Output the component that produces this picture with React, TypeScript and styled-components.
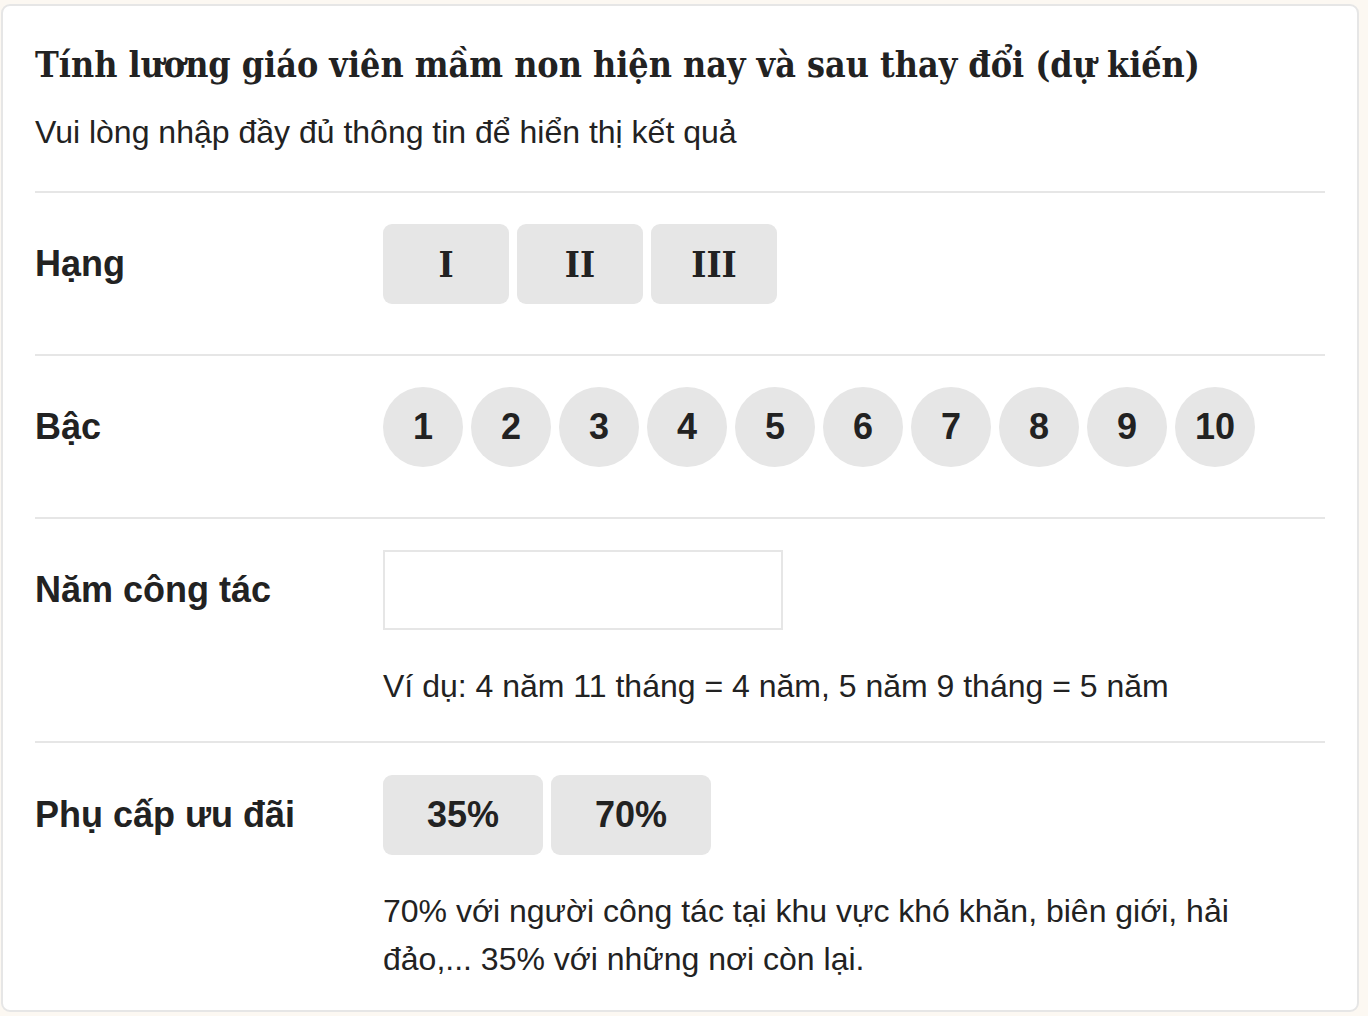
import React, { useState } from "react";
import styled, { createGlobalStyle } from "styled-components";

const GlobalStyle = createGlobalStyle`
  html, body {
    margin: 0;
    padding: 0;
    background: #fcf8f2;
  }
  body {
    font-family: "Liberation Sans", Arial, sans-serif;
    color: #222;
  }
  * {
    box-sizing: border-box;
  }
`;

const serif = '"DejaVu Serif", "Liberation Serif", serif';

const Page = styled.div`
  padding: 4px 9px 0 1px;
`;

const Card = styled.section`
  background: #fff;
  border: 2px solid #e6e6e6;
  border-radius: 9px;
  padding: 34px 32px 0;
`;

const Title = styled.h2`
  margin: 0 0 18px;
  font-family: ${serif};
  font-stretch: condensed;
  font-weight: 700;
  font-size: 35.5px;
  line-height: 50px;
  color: #222;
`;

const Subtitle = styled.p`
  margin: 0 0 35px;
  font-size: 32px;
  line-height: 48px;
`;

const Row = styled.div<{ $last?: boolean }>`
  display: grid;
  grid-template-columns: 348px 1fr;
  border-top: 2px solid #e6e6e6;
  padding: ${(p) => (p.$last ? "32px 0 27px" : "31px 0 31px")};
`;

const Label = styled.div`
  height: 80px;
  display: flex;
  align-items: center;
  font-size: 36px;
  font-weight: 700;
`;

const Field = styled.div`
  display: flex;
  flex-direction: column;
  align-items: flex-start;
`;

const Options = styled.div<{ $spaced?: boolean }>`
  display: flex;
  gap: 8px;
  margin-bottom: ${(p) => (p.$spaced ? "19px" : "0")};
`;

const OptionButton = styled.button<{ $w: number; $round?: boolean; $serif?: boolean; $active?: boolean }>`
  width: ${(p) => p.$w}px;
  height: 80px;
  border: none;
  border-radius: ${(p) => (p.$round ? "50%" : "9px")};
  background: ${(p) => (p.$active ? "#d4d4d4" : "#e6e6e6")};
  color: #222;
  font-family: ${(p) => (p.$serif ? serif : '"Liberation Sans", Arial, sans-serif')};
  font-stretch: ${(p) => (p.$serif ? "condensed" : "normal")};
  font-weight: 700;
  font-size: 36px;
  padding: 0;
  cursor: pointer;
`;

const YearsInput = styled.input`
  width: 400px;
  height: 80px;
  border: 2px solid #e6e6e6;
  border-radius: 0;
  padding: 0 16px;
  font-family: "Liberation Sans", Arial, sans-serif;
  font-size: 32px;
  color: #222;
  outline: none;
`;

const Hint = styled.p`
  margin: 32px 0 0;
  max-width: 880px;
  font-size: 32px;
  line-height: 48px;
`;

const ranks = ["I", "II", "III"];
const levels = Array.from({ length: 10 }, (_, i) => String(i + 1));
const allowances = ["35%", "70%"];

export default function App() {
  const [rank, setRank] = useState<string | null>(null);
  const [level, setLevel] = useState<string | null>(null);
  const [allowance, setAllowance] = useState<string | null>(null);
  const [years, setYears] = useState("");

  return (
    <Page>
      <GlobalStyle />
      <Card>
        <Title>Tính lương giáo viên mầm non hiện nay và sau thay đổi (dự kiến)</Title>
        <Subtitle>Vui lòng nhập đầy đủ thông tin để hiển thị kết quả</Subtitle>

        <Row>
          <Label>Hạng</Label>
          <Field>
            <Options $spaced>
              {ranks.map((r) => (
                <OptionButton key={r} $w={126} $serif $active={rank === r} onClick={() => setRank(r)}>
                  {r}
                </OptionButton>
              ))}
            </Options>
          </Field>
        </Row>

        <Row>
          <Label>Bậc</Label>
          <Field>
            <Options $spaced>
              {levels.map((l) => (
                <OptionButton key={l} $w={80} $round $active={level === l} onClick={() => setLevel(l)}>
                  {l}
                </OptionButton>
              ))}
            </Options>
          </Field>
        </Row>

        <Row>
          <Label>Năm công tác</Label>
          <Field>
            <YearsInput value={years} onChange={(e) => setYears(e.target.value)} />
            <Hint>Ví dụ: 4 năm 11 tháng = 4 năm, 5 năm 9 tháng = 5 năm</Hint>
          </Field>
        </Row>

        <Row $last>
          <Label>Phụ cấp ưu đãi</Label>
          <Field>
            <Options>
              {allowances.map((a) => (
                <OptionButton key={a} $w={160} $active={allowance === a} onClick={() => setAllowance(a)}>
                  {a}
                </OptionButton>
              ))}
            </Options>
            <Hint>
              70% với người công tác tại khu vực khó khăn, biên giới, hải đảo,... 35% với những nơi còn lại.
            </Hint>
          </Field>
        </Row>
      </Card>
    </Page>
  );
}
